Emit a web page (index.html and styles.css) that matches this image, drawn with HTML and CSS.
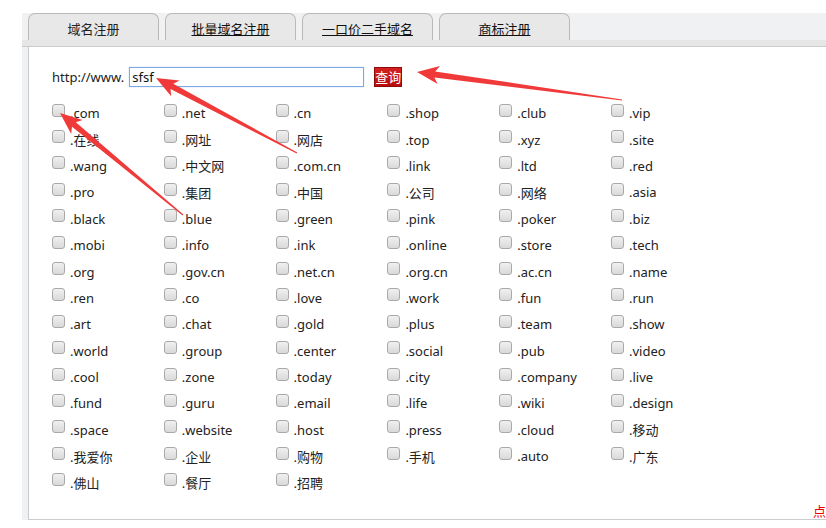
FILE: index.html
```html
<!DOCTYPE html>
<html lang="zh-CN">
<head>
  <meta charset="UTF-8">
  <meta name="viewport" content="width=device-width, initial-scale=1.0">
  <title>域名注册</title>
  <link rel="stylesheet" href="styles.css">
</head>
<body>

<div class="domain-box">
  <ul class="tabs">
    <li class="active">域名注册</li>
    <li><a href="#">批量域名注册</a></li>
    <li><a href="#">一口价二手域名</a></li>
    <li><a href="#">商标注册</a></li>
  </ul>
  <div class="tab-band"></div>

  <div class="panel">
    <form class="search-row">
      <span class="prefix">http://www.</span>
      <input type="text" class="domain-input" value="sfsf">
      <button type="button" class="search-btn">查询</button>
    </form>

    <div class="ext-list">
      <label><input type="checkbox">.com</label>
      <label><input type="checkbox">.net</label>
      <label><input type="checkbox">.cn</label>
      <label><input type="checkbox">.shop</label>
      <label><input type="checkbox">.club</label>
      <label><input type="checkbox">.vip</label>
      <label><input type="checkbox">.在线</label>
      <label><input type="checkbox">.网址</label>
      <label><input type="checkbox">.网店</label>
      <label><input type="checkbox">.top</label>
      <label><input type="checkbox">.xyz</label>
      <label><input type="checkbox">.site</label>
      <label><input type="checkbox">.wang</label>
      <label><input type="checkbox">.中文网</label>
      <label><input type="checkbox">.com.cn</label>
      <label><input type="checkbox">.link</label>
      <label><input type="checkbox">.ltd</label>
      <label><input type="checkbox">.red</label>
      <label><input type="checkbox">.pro</label>
      <label><input type="checkbox">.集团</label>
      <label><input type="checkbox">.中国</label>
      <label><input type="checkbox">.公司</label>
      <label><input type="checkbox">.网络</label>
      <label><input type="checkbox">.asia</label>
      <label><input type="checkbox">.black</label>
      <label><input type="checkbox">.blue</label>
      <label><input type="checkbox">.green</label>
      <label><input type="checkbox">.pink</label>
      <label><input type="checkbox">.poker</label>
      <label><input type="checkbox">.biz</label>
      <label><input type="checkbox">.mobi</label>
      <label><input type="checkbox">.info</label>
      <label><input type="checkbox">.ink</label>
      <label><input type="checkbox">.online</label>
      <label><input type="checkbox">.store</label>
      <label><input type="checkbox">.tech</label>
      <label><input type="checkbox">.org</label>
      <label><input type="checkbox">.gov.cn</label>
      <label><input type="checkbox">.net.cn</label>
      <label><input type="checkbox">.org.cn</label>
      <label><input type="checkbox">.ac.cn</label>
      <label><input type="checkbox">.name</label>
      <label><input type="checkbox">.ren</label>
      <label><input type="checkbox">.co</label>
      <label><input type="checkbox">.love</label>
      <label><input type="checkbox">.work</label>
      <label><input type="checkbox">.fun</label>
      <label><input type="checkbox">.run</label>
      <label><input type="checkbox">.art</label>
      <label><input type="checkbox">.chat</label>
      <label><input type="checkbox">.gold</label>
      <label><input type="checkbox">.plus</label>
      <label><input type="checkbox">.team</label>
      <label><input type="checkbox">.show</label>
      <label><input type="checkbox">.world</label>
      <label><input type="checkbox">.group</label>
      <label><input type="checkbox">.center</label>
      <label><input type="checkbox">.social</label>
      <label><input type="checkbox">.pub</label>
      <label><input type="checkbox">.video</label>
      <label><input type="checkbox">.cool</label>
      <label><input type="checkbox">.zone</label>
      <label><input type="checkbox">.today</label>
      <label><input type="checkbox">.city</label>
      <label><input type="checkbox">.company</label>
      <label><input type="checkbox">.live</label>
      <label><input type="checkbox">.fund</label>
      <label><input type="checkbox">.guru</label>
      <label><input type="checkbox">.email</label>
      <label><input type="checkbox">.life</label>
      <label><input type="checkbox">.wiki</label>
      <label><input type="checkbox">.design</label>
      <label><input type="checkbox">.space</label>
      <label><input type="checkbox">.website</label>
      <label><input type="checkbox">.host</label>
      <label><input type="checkbox">.press</label>
      <label><input type="checkbox">.cloud</label>
      <label><input type="checkbox">.移动</label>
      <label><input type="checkbox">.我爱你</label>
      <label><input type="checkbox">.企业</label>
      <label><input type="checkbox">.购物</label>
      <label><input type="checkbox">.手机</label>
      <label><input type="checkbox">.auto</label>
      <label><input type="checkbox">.广东</label>
      <label><input type="checkbox">.佛山</label>
      <label><input type="checkbox">.餐厅</label>
      <label><input type="checkbox">.招聘</label>
    </div>

    <div class="more-row"><a href="#" class="more-link">点</a></div>
  </div>
</div>

<!-- annotation arrows drawn over the screenshot -->
<svg class="arrows" width="826" height="528" viewBox="0 0 826 528">
  <polygon points="417,72 437.6,83.9 434.4,77.4 621.9,100.6 622.1,99.4 435.2,71.4 440,66.1"/>
  <polygon points="156,78 171.2,96.3 170.5,89.1 296.7,153.5 297.3,152.5 173.3,83.8 179.6,80.4"/>
  <polygon points="60,113 71.2,133.9 72,126.8 182.6,215.5 183.4,214.5 75.8,122.2 82.7,120.1"/>
</svg>

</body>
</html>
```

FILE: styles.css
```css
body {
  font-family: "Noto Sans", "Noto Sans CJK SC", sans-serif;
  font-size: 13px;
  color: #222;
  margin: 0;
  background: #fff;
  position: relative;
  width: 826px;
  height: 528px;
  overflow: hidden;
}

.domain-box {
  margin: 13px 0 0 22px;
  padding-left: 6px;
  width: 900px;
  background: #f0f1f2;
}

.tabs {
  list-style: none;
  margin: 0;
  padding: 0;
  display: flex;
  gap: 6px;
  height: 27px;
}

.tabs li {
  width: 129px;
  height: 26px;
  line-height: 31px;
  text-align: center;
  background: #e8e8e8;
  border: 1px solid #b9b9b9;
  border-bottom: none;
  border-radius: 7px 7px 0 0;
}

.tabs a {
  color: #111;
  text-decoration: underline;
}

.tab-band {
  height: 6px;
  margin-left: -6px;
  background: #e6e6e6;
  border-bottom: 1px solid #c9cbcd;
}

.panel {
  background: #fff;
  border-left: 1px solid #c9cbcd;
  border-bottom: 1px solid #c9cbcd;
  padding: 20px 0 0 23px;
  height: 452px;
  position: relative;
}

.search-row {
  display: flex;
  align-items: center;
  height: 20px;
  margin: 0;
}

.prefix {
  color: #222;
  margin-right: 5px;
}

.domain-input {
  width: 229px;
  height: 16px;
  padding: 1px 2px;
  border: 1px solid #7ea9e3;
  box-shadow: 0 0 1px #9fc3f0;
  font: inherit;
  color: #111;
  outline: none;
}

.search-btn {
  margin-left: 10px;
  height: 20px;
  padding: 0;
  border: 1px solid #8e0a0a;
  background: linear-gradient(#d42020, #b80d0d);
  color: #fff;
  font: inherit;
  font-size: 13px;
  line-height: 18px;
  white-space: nowrap;
}

.ext-list {
  margin-top: 13px;
  display: grid;
  grid-template-columns: repeat(6, 111.8px);
  grid-auto-rows: 26.4px;
}

.ext-list label {
  display: flex;
  align-items: center;
  white-space: nowrap;
  color: #222;
}

.ext-list input {
  appearance: none;
  -webkit-appearance: none;
  width: 13px;
  height: 13px;
  margin: -6px 5px 0 0;
  border: 1px solid #a9a9a9;
  border-radius: 3px;
  background: linear-gradient(#f0f0f0, #d9d9d9);
}

.more-row {
  margin-top: 5px;
  padding-left: 761px;
  white-space: nowrap;
}

.more-link {
  color: #e00;
  text-decoration: none;
}

.arrows {
  position: absolute;
  top: 0;
  left: 0;
  pointer-events: none;
}

.arrows polygon {
  fill: #f03a3a;
}
```
